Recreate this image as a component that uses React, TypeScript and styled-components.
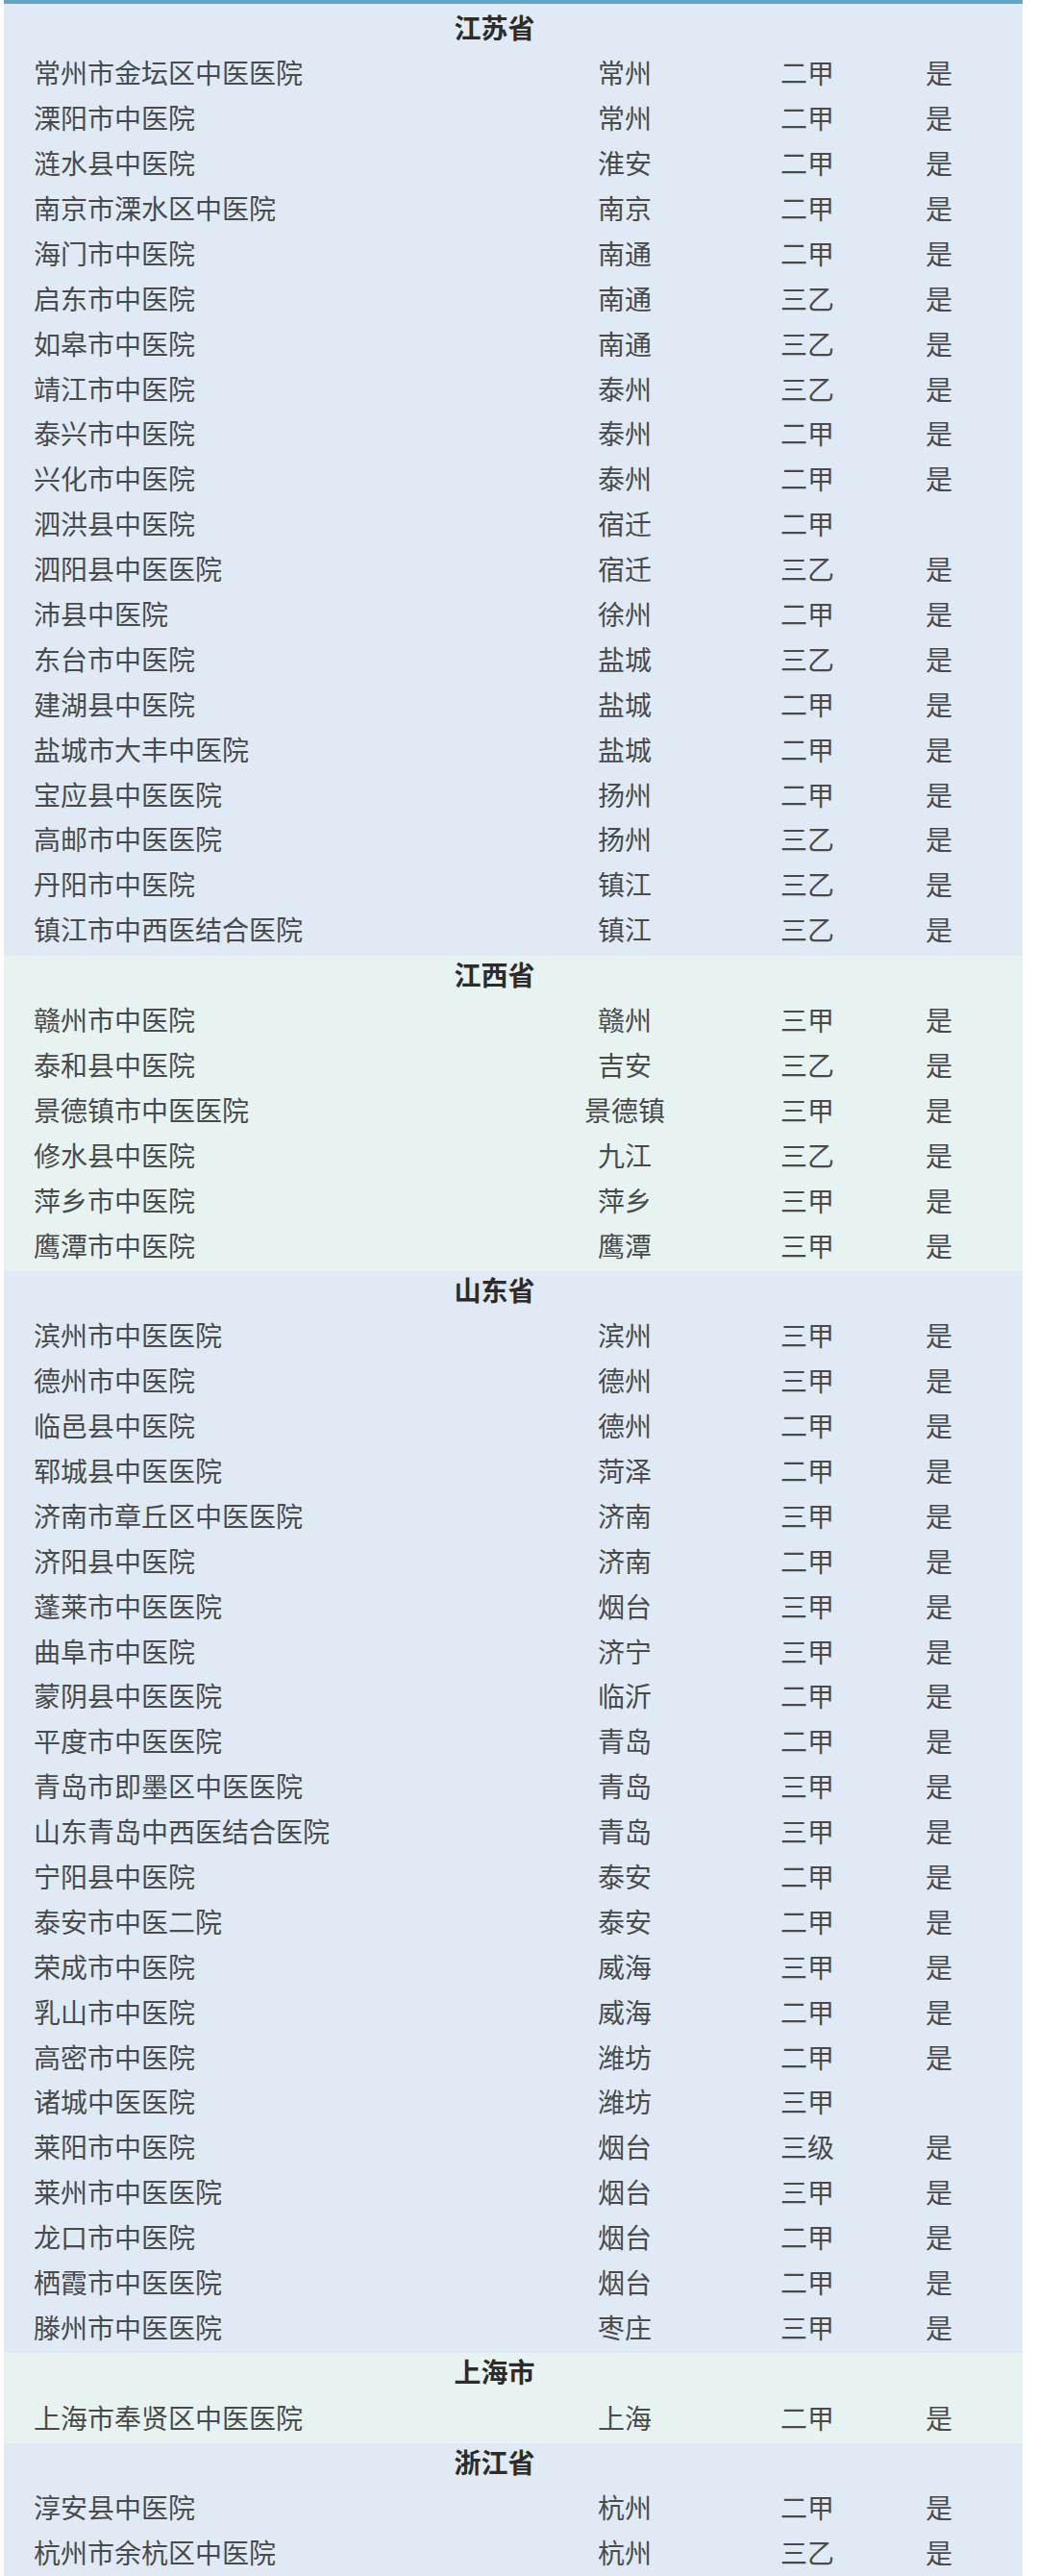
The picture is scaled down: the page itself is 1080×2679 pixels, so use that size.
import React from "react";
import styled, { createGlobalStyle } from "styled-components";

type Hospital = [string, string, string, string];
type Province = { name: string; tone: "blue" | "green"; rows: Hospital[] };

const provinces: Province[] = [
  {
    name: "江苏省",
    tone: "blue",
    rows: [
      ["常州市金坛区中医医院", "常州", "二甲", "是"],
      ["溧阳市中医院", "常州", "二甲", "是"],
      ["涟水县中医院", "淮安", "二甲", "是"],
      ["南京市溧水区中医院", "南京", "二甲", "是"],
      ["海门市中医院", "南通", "二甲", "是"],
      ["启东市中医院", "南通", "三乙", "是"],
      ["如皋市中医院", "南通", "三乙", "是"],
      ["靖江市中医院", "泰州", "三乙", "是"],
      ["泰兴市中医院", "泰州", "二甲", "是"],
      ["兴化市中医院", "泰州", "二甲", "是"],
      ["泗洪县中医院", "宿迁", "二甲", ""],
      ["泗阳县中医医院", "宿迁", "三乙", "是"],
      ["沛县中医院", "徐州", "二甲", "是"],
      ["东台市中医院", "盐城", "三乙", "是"],
      ["建湖县中医院", "盐城", "二甲", "是"],
      ["盐城市大丰中医院", "盐城", "二甲", "是"],
      ["宝应县中医医院", "扬州", "二甲", "是"],
      ["高邮市中医医院", "扬州", "三乙", "是"],
      ["丹阳市中医院", "镇江", "三乙", "是"],
      ["镇江市中西医结合医院", "镇江", "三乙", "是"],
    ],
  },
  {
    name: "江西省",
    tone: "green",
    rows: [
      ["赣州市中医院", "赣州", "三甲", "是"],
      ["泰和县中医院", "吉安", "三乙", "是"],
      ["景德镇市中医医院", "景德镇", "三甲", "是"],
      ["修水县中医院", "九江", "三乙", "是"],
      ["萍乡市中医院", "萍乡", "三甲", "是"],
      ["鹰潭市中医院", "鹰潭", "三甲", "是"],
    ],
  },
  {
    name: "山东省",
    tone: "blue",
    rows: [
      ["滨州市中医医院", "滨州", "三甲", "是"],
      ["德州市中医院", "德州", "三甲", "是"],
      ["临邑县中医院", "德州", "二甲", "是"],
      ["郓城县中医医院", "菏泽", "二甲", "是"],
      ["济南市章丘区中医医院", "济南", "三甲", "是"],
      ["济阳县中医院", "济南", "二甲", "是"],
      ["蓬莱市中医医院", "烟台", "三甲", "是"],
      ["曲阜市中医院", "济宁", "三甲", "是"],
      ["蒙阴县中医医院", "临沂", "二甲", "是"],
      ["平度市中医医院", "青岛", "二甲", "是"],
      ["青岛市即墨区中医医院", "青岛", "三甲", "是"],
      ["山东青岛中西医结合医院", "青岛", "三甲", "是"],
      ["宁阳县中医院", "泰安", "二甲", "是"],
      ["泰安市中医二院", "泰安", "二甲", "是"],
      ["荣成市中医院", "威海", "三甲", "是"],
      ["乳山市中医院", "威海", "二甲", "是"],
      ["高密市中医院", "潍坊", "二甲", "是"],
      ["诸城中医医院", "潍坊", "三甲", ""],
      ["莱阳市中医院", "烟台", "三级", "是"],
      ["莱州市中医医院", "烟台", "三甲", "是"],
      ["龙口市中医院", "烟台", "二甲", "是"],
      ["栖霞市中医医院", "烟台", "二甲", "是"],
      ["滕州市中医医院", "枣庄", "三甲", "是"],
    ],
  },
  {
    name: "上海市",
    tone: "green",
    rows: [["上海市奉贤区中医医院", "上海", "二甲", "是"]],
  },
  {
    name: "浙江省",
    tone: "blue",
    rows: [
      ["淳安县中医院", "杭州", "二甲", "是"],
      ["杭州市余杭区中医院", "杭州", "三乙", "是"],
    ],
  },
];

const GlobalStyle = createGlobalStyle`
  html, body {
    margin: 0;
    padding: 0;
    background: #ffffff;
    overflow: hidden;
  }
  body {
    font-family: "Noto Sans CJK SC", "Noto Sans", sans-serif;
  }
`;

const Page = styled.div`
  width: 1080px;
  height: 2679px;
  overflow: hidden;
  padding: 0 16px 0 4px;
  box-sizing: border-box;
`;

const Table = styled.div`
  border-top: 4px solid #62a5c2;
  padding-top: 5px;
  background: #dfeaf5;
`;

const Section = styled.div<{ $tone: "blue" | "green" }>`
  background: ${({ $tone }) => ($tone === "blue" ? "#dfeaf5" : "#e7f3f1")};
  display: grid;
  grid-template-columns: 545px 140px 240px 34px;
  padding-left: 31px;
  grid-auto-rows: 46.9px;
`;

const Heading = styled.div`
  grid-column: 1 / -1;
  display: flex;
  align-items: center;
  justify-content: center;
  font-size: 28px;
  font-weight: 700;
  color: #2c2c2c;
  padding-bottom: 9px;
`;

const Cell = styled.div<{ $align?: "left" | "center" }>`
  display: flex;
  align-items: center;
  justify-content: ${({ $align }) => ($align === "left" ? "flex-start" : "center")};
  font-size: 28px;
  color: #4a4a4a;
  white-space: nowrap;
  padding-bottom: 8px;
`;

const App: React.FC = () => (
  <Page>
    <GlobalStyle />
    <Table>
      {provinces.map((p) => (
        <Section key={p.name} $tone={p.tone}>
          <Heading>{p.name}</Heading>
          {p.rows.map(([name, city, grade, ok]) => (
            <React.Fragment key={name}>
              <Cell $align="left">{name}</Cell>
              <Cell>{city}</Cell>
              <Cell>{grade}</Cell>
              <Cell>{ok}</Cell>
            </React.Fragment>
          ))}
        </Section>
      ))}
    </Table>
  </Page>
);

export default App;
